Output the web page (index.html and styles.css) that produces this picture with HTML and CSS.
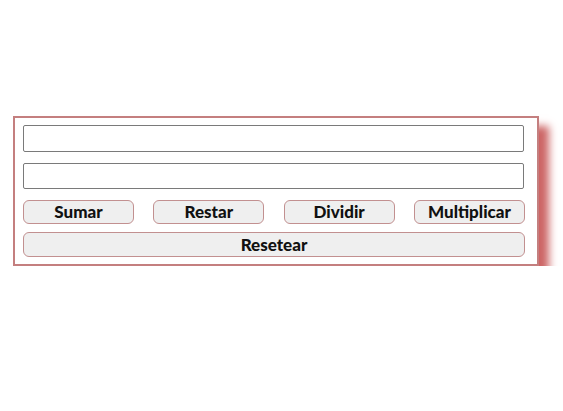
FILE: index.html
```html
<!DOCTYPE html>
<html lang="es">
<head>
<meta charset="utf-8">
<title>Calculadora</title>
<link rel="stylesheet" href="styles.css">
</head>
<body>
<div class="calc">
  <input class="field" type="text">
  <input class="field field-2" type="text">
  <div class="ops">
    <button class="btn">Sumar</button>
    <button class="btn">Restar</button>
    <button class="btn">Dividir</button>
    <button class="btn">Multiplicar</button>
  </div>
  <button class="btn btn-reset">Resetear</button>
</div>
</body>
</html>
```
FILE: styles.css
```css
html, body {
  margin: 0;
  padding: 0;
  background: #ffffff;
}
body {
  padding-top: 116px;
  font-family: "Lato", "Open Sans", sans-serif;
}
.calc {
  box-sizing: border-box;
  margin-left: 13px;
  width: 526px;
  height: 150px;
  border: 2px solid #c47f7f;
  background: #ffffff;
  padding: 7px 13px 0 8px;
  box-shadow: 10px 10px 8px #cd6666;
  display: flex;
  flex-direction: column;
}
.field {
  box-sizing: border-box;
  display: block;
  width: 501px;
  height: 27px;
  margin: 0;
  border: 1px solid #7a7a7a;
  border-radius: 2px;
  background: #fff;
  padding: 0 4px;
}
.field-2 {
  margin-top: 11px;
  height: 26px;
}
.ops {
  display: flex;
  justify-content: space-between;
  width: 502px;
  margin-top: 11px;
}
.btn {
  box-sizing: border-box;
  width: 111px;
  height: 24px;
  margin: 0;
  padding: 0;
  border: 1px solid #c29090;
  border-radius: 6px;
  background: #efefef;
  color: #111;
  font-family: "Lato", "Open Sans", sans-serif;
  font-weight: 900;
  font-size: 17px;
  line-height: 22px;
}
.btn-reset {
  width: 502px;
  height: 25px;
  margin-top: 8px;
}
```
